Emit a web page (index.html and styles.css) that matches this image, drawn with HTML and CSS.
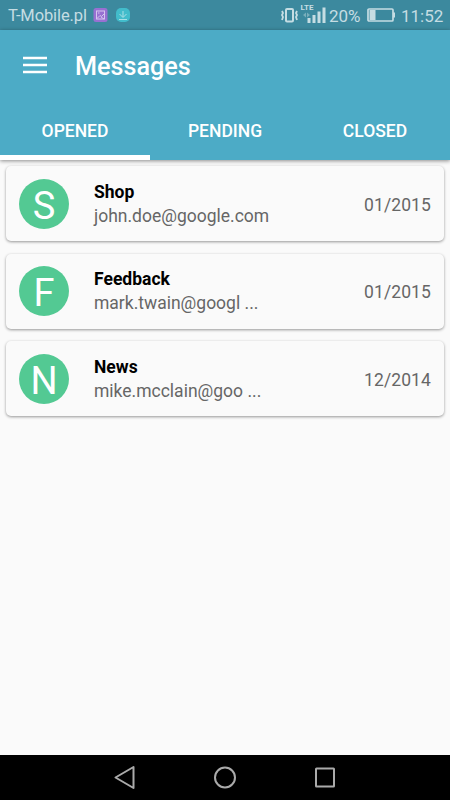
FILE: index.html
```html
<!DOCTYPE html>
<html lang="en">
<head>
<meta charset="utf-8">
<title>Messages</title>
<link rel="stylesheet" href="styles.css">
</head>
<body>
<div class="status">
  <span class="carrier">T-Mobile.pl</span>
  <svg class="notice" width="38" height="16" viewBox="0 0 38 16">
    <rect x="0.5" y="1" width="14" height="14" rx="2.5" fill="#9870d2"/>
    <g fill="none" stroke="#d4c5ef" stroke-width="1"><rect x="3.5" y="4" width="8" height="8"/><path d="M4 11.5l3-3 1.5 1 3-3M5 6h1.5M8 10l3 2"/></g>
    <rect x="23" y="1" width="14" height="14" rx="5" fill="#42bccb"/>
    <path d="M30 4v6M26.500 7l3.500 3.500 3.500-3.500M26 12.500h8" fill="none" stroke="#a8e0e6"/>
  </svg>
  <svg class="signals" width="46" height="26" viewBox="280 3 46 26">
    <g fill="none" stroke="#c5dde3"><rect x="286" y="9" width="7" height="12.500" rx="1" stroke-width="2"/><path d="M282 11l1 2-1 2 1 2-1 3M297 11l-1 2 1 2-1 2 1 3" stroke-width="1.800"/></g>
    <text x="300.500" y="10" class="lte">LTE</text>
    <path d="M303 15l3-2.500v5zM310 15l-3-2.500v5z" fill="#79aebb"/>
    <path d="M307.500 18h3v5h-3zM312.500 15h3v8h-3zM317.500 11.500h3v11.500h-3zM322.500 7.500h3v15.500h-3z" fill="#c5dde3"/>
  </svg>
  <span class="percent">20%</span>
  <svg class="battery" width="29" height="16" viewBox="0 0 29 16"><rect x="1" y="2" width="25" height="12" rx="1" fill="none" stroke="#c5dde3" stroke-width="1.700"/><path d="M2.500 3h6v10h-6zM26 5.500h2v5h-2z" fill="#c5dde3"/></svg>
  <span class="clock">11:52</span>
</div>
<header class="appbar">
  <div class="toolbar">
    <svg class="menu" width="24" height="18" viewBox="0 0 24 18"><path d="M0 2h24M0 9h24M0 16h24" stroke="#fff" stroke-width="2.700"/></svg>
    <h1 class="title">Messages</h1>
  </div>
  <nav class="tabs">
    <a class="tab active"><span>OPENED</span></a>
    <a class="tab"><span>PENDING</span></a>
    <a class="tab"><span>CLOSED</span></a>
  </nav>
</header>
<main class="list">
  <article class="card">
    <div class="avatar">S</div>
    <div class="info"><div class="name">Shop</div><div class="mail">john.doe@google.com</div></div>
    <time class="date">01/2015</time>
  </article>
  <article class="card">
    <div class="avatar">F</div>
    <div class="info"><div class="name">Feedback</div><div class="mail">mark.twain@googl ...</div></div>
    <time class="date">01/2015</time>
  </article>
  <article class="card">
    <div class="avatar">N</div>
    <div class="info"><div class="name">News</div><div class="mail">mike.mcclain@goo ...</div></div>
    <time class="date">12/2014</time>
  </article>
</main>
<footer class="navbar">
  <svg width="24" height="26" viewBox="0 0 24 26"><path d="M2.500 12.500L20.500 2v21z" fill="none" stroke="#aaa" stroke-width="2" stroke-linejoin="round"/></svg>
  <svg width="24" height="26" viewBox="0 0 24 26"><circle cx="12" cy="12.500" r="10" fill="none" stroke="#aaa" stroke-width="2"/></svg>
  <svg width="24" height="26" viewBox="0 0 24 26"><rect x="3" y="3.500" width="18" height="18" rx=".5" fill="none" stroke="#aaa" stroke-width="2"/></svg>
</footer>
</body>
</html>
```
FILE: styles.css
```css
* { box-sizing: border-box; }
body {
  margin: 0;
  width: 450px;
  height: 800px;
  display: flex;
  flex-direction: column;
  overflow: hidden;
  background: #fafafa;
  font-family: Roboto, sans-serif;
}
.status {
  height: 30px;
  flex: none;
  display: flex;
  align-items: center;
  padding: 2px 7px 0 8px;
  background: #3c899e;
  color: #c5dde3;
  font-size: 16.5px;
  line-height: 28px;
  white-space: nowrap;
}
.carrier { width: 79px; letter-spacing: -.1px; }
.notice { margin-left: 6px; margin-top: -2px; }
.signals { margin-left: auto; flex: none; }
.lte { font: bold 8px Roboto, sans-serif; fill: #c5dde3; }
.percent { width: 38px; margin-left: 3px; font-size: 17px; }
.battery { flex: none; margin-top: -2px; }
.clock { width: 42px; margin-left: 5px; font-size: 17px; }
.percent, .clock { flex: none; }
.appbar {
  height: 130px;
  flex: none;
  background: #4cabc6;
  color: #fff;
  box-shadow: 0 1px 4px rgba(0, 0, 0, .45);
  z-index: 1;
}
.toolbar {
  height: 72px;
  display: flex;
  align-items: center;
  padding-left: 23px;
}
.menu { margin-top: -3px; }
.title {
  margin: 1px 0 0 28px;
  font-size: 25.2px;
  font-weight: 500;
}
.tabs { display: flex; height: 58px; }
.tab {
  width: 150px;
  display: flex;
  align-items: center;
  justify-content: center;
  padding-top: 5px;
  border-bottom: 5px solid transparent;
  font-size: 17.5px;
  font-weight: 500;
}
.active { border-bottom-color: #fff; }
.list {
  flex: 1;
  display: flex;
  flex-direction: column;
  gap: 12.5px;
  padding: 6px;
}
.card {
  height: 75px;
  display: flex;
  align-items: center;
  padding: 0 13px;
  border-radius: 5px;
  background: #fafafa;
  box-shadow: 0 1px 3px rgba(0, 0, 0, .4);
}
.avatar {
  width: 50px;
  height: 50px;
  border-radius: 50%;
  background: #53c993;
  color: #fff;
  font-size: 38px;
  line-height: 54px;
  text-align: center;
}
.info { flex: 1; margin-left: 25px; }
.name { font-size: 17.5px; font-weight: 700; line-height: 24px; color: #000; }
.mail, .date { font-size: 17.5px; line-height: 24px; color: #666; }
.date { padding-top: 2px; letter-spacing: .1px; }
.navbar {
  height: 45px;
  flex: none;
  display: flex;
  justify-content: center;
  align-items: center;
  gap: 76px;
  background: #000;
}
```
